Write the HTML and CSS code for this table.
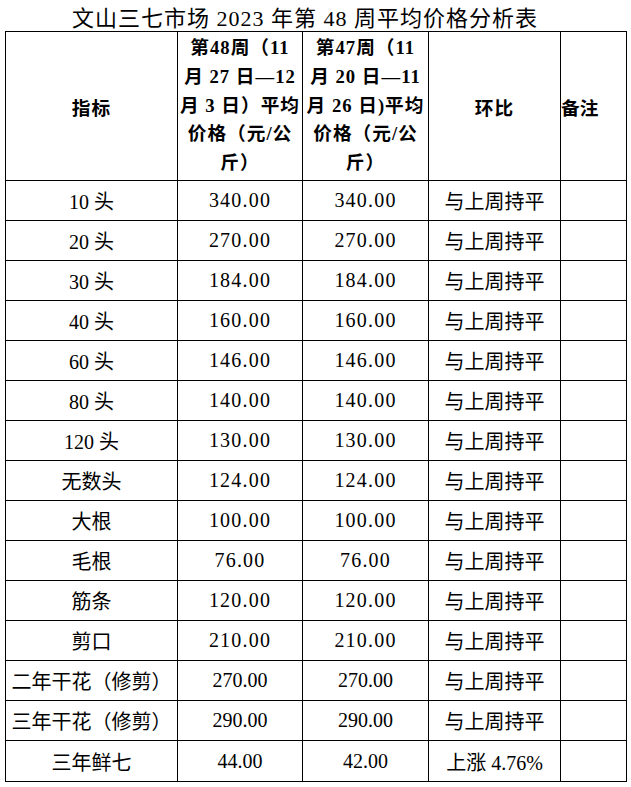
FILE: index.html
```html
<!DOCTYPE html>
<html lang="zh-CN">
<head>
<meta charset="utf-8">
<title>文山三七市场2023年第48周平均价格分析表</title>
<link rel="stylesheet" href="styles.css">
</head>
<body>
<div class="title">文山三七市场 2023 年第 48 周平均价格分析表</div>
<table class="price-table">
  <colgroup>
    <col class="c1"><col class="c2"><col class="c3"><col class="c4"><col class="c5">
  </colgroup>
  <thead>
    <tr class="head-row">
      <th>指标</th>
      <th class="multi"><span class="ln">第48周（11</span><span class="ln">月 27 日—12</span><span class="ln">月 3 日）平均</span><span class="ln">价格（元/公</span><span class="ln">斤）</span></th>
      <th class="multi"><span class="ln">第47周（11</span><span class="ln">月 20 日—11</span><span class="ln">月 26 日)平均</span><span class="ln">价格（元/公</span><span class="ln">斤）</span></th>
      <th>环比</th>
      <th class="left">备注</th>
    </tr>
  </thead>
  <tbody>
    <tr><td>10 头</td><td class="song">340.00</td><td class="song">340.00</td><td>与上周持平</td><td></td></tr>
    <tr><td>20 头</td><td class="song">270.00</td><td class="song">270.00</td><td>与上周持平</td><td></td></tr>
    <tr><td>30 头</td><td class="song">184.00</td><td class="song">184.00</td><td>与上周持平</td><td></td></tr>
    <tr><td>40 头</td><td class="song">160.00</td><td class="song">160.00</td><td>与上周持平</td><td></td></tr>
    <tr><td>60 头</td><td class="song">146.00</td><td class="song">146.00</td><td>与上周持平</td><td></td></tr>
    <tr><td>80 头</td><td class="song">140.00</td><td class="song">140.00</td><td>与上周持平</td><td></td></tr>
    <tr><td>120 头</td><td class="song">130.00</td><td class="song">130.00</td><td>与上周持平</td><td></td></tr>
    <tr><td>无数头</td><td class="song">124.00</td><td class="song">124.00</td><td>与上周持平</td><td></td></tr>
    <tr><td>大根</td><td class="song">100.00</td><td class="song">100.00</td><td>与上周持平</td><td></td></tr>
    <tr><td>毛根</td><td class="song">76.00</td><td class="song">76.00</td><td>与上周持平</td><td></td></tr>
    <tr><td>筋条</td><td class="song">120.00</td><td class="song">120.00</td><td>与上周持平</td><td></td></tr>
    <tr><td>剪口</td><td class="song">210.00</td><td class="song">210.00</td><td>与上周持平</td><td></td></tr>
    <tr><td>二年干花（修剪）</td><td>270.00</td><td>270.00</td><td>与上周持平</td><td></td></tr>
    <tr><td>三年干花（修剪）</td><td>290.00</td><td>290.00</td><td>与上周持平</td><td></td></tr>
    <tr class="last"><td>三年鲜七</td><td>44.00</td><td>42.00</td><td>上涨 4.76%</td><td></td></tr>
  </tbody>
</table>
</body>
</html>
```
FILE: styles.css
```css
html, body {
  margin: 0;
  padding: 0;
  background: #fff;
  color: #000;
}
body {
  width: 631px;
  font-family: "Liberation Serif", "Noto Sans CJK SC", serif;
}
.title {
  height: 31px;
  box-sizing: border-box;
  padding-top: 6px;
  padding-right: 21px;
  line-height: 25px;
  font-size: 22px;
  letter-spacing: 1px;
  text-align: center;
  white-space: nowrap;
}
.price-table {
  margin-left: 5px;
  width: 621px;
  table-layout: fixed;
  border-collapse: collapse;
  font-size: 20px;
}
.c1 { width: 172px; }
.c2 { width: 125px; }
.c3 { width: 126px; }
.c4 { width: 132px; }
.c5 { width: 66px; }
.price-table th,
.price-table td {
  border: 1px solid #000;
  padding: 0;
  text-align: center;
  vertical-align: middle;
  white-space: nowrap;
  overflow: hidden;
}
.price-table th {
  font-size: 18.67px;
  font-weight: bold;
  letter-spacing: 1px;
}
.head-row {
  height: 149px;
}
.price-table th.left {
  text-align: left;
  letter-spacing: 0;
}
.multi .ln {
  display: block;
  line-height: 28.7px;
}
.price-table tbody tr {
  height: 40px;
}
.price-table tbody tr.last {
  height: 41px;
}
.song {
  letter-spacing: 1.2px;
}
```
